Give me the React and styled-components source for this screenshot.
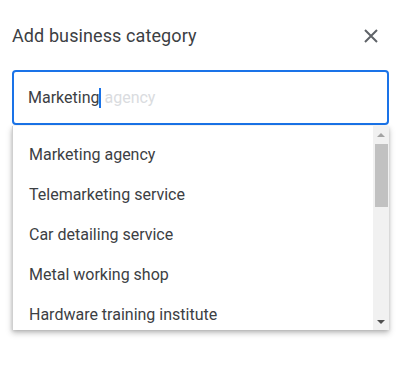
import styled, { createGlobalStyle } from 'styled-components';

const GlobalStyle = createGlobalStyle`
  body {
    margin: 0;
    background: #fff;
    font-family: Roboto, 'Liberation Sans', sans-serif;
  }
`;

const Dialog = styled.div`
  width: 403px;
  height: 368px;
  padding: 24px 14px 0 12px;
  box-sizing: border-box;
  background: #fff;
`;

const Header = styled.div`
  display: flex;
  align-items: center;
  justify-content: space-between;
  height: 24px;
`;

const Title = styled.h1`
  margin: 0;
  font-size: 18px;
  font-weight: 400;
  line-height: 24px;
  color: #3c4043;
  letter-spacing: 0.1px;
`;

const CloseButton = styled.button`
  border: 0;
  background: none;
  padding: 0;
  width: 24px;
  height: 24px;
  display: flex;
  align-items: center;
  justify-content: center;
  margin-right: 6px;
  cursor: pointer;
`;

const Field = styled.div`
  margin-top: 22px;
  width: 377px;
`;

const InputBox = styled.div`
  height: 55px;
  box-sizing: border-box;
  border: 2px solid #1a73e8;
  border-radius: 4px;
  display: flex;
  align-items: center;
  padding-left: 14px;
  font-size: 16px;
  color: #3c4043;
`;

const Typed = styled.span`
  color: #3c4043;
`;

const Caret = styled.span`
  display: inline-block;
  width: 2px;
  height: 20px;
  background: #1a73e8;
  margin: 0 3px 0 0;
`;

const Hint = styled.span`
  color: #dadce0;
`;

const Dropdown = styled.div`
  margin-top: 1px;
  height: 204px;
  display: flex;
  background: #fff;
  border-left: 1px solid #d0d0d0;
  box-shadow: 0 3px 6px rgba(0, 0, 0, 0.25), 0 1px 3px rgba(0, 0, 0, 0.12);
  overflow: hidden;
`;

const List = styled.ul`
  flex: 1;
  list-style: none;
  margin: 0;
  padding: 8px 0 0;
`;

const Item = styled.li`
  height: 40px;
  display: flex;
  align-items: center;
  padding-left: 16px;
  font-size: 16px;
  color: #3c4043;
`;

const Scrollbar = styled.div`
  width: 16px;
  background: #f1f1f1;
  display: flex;
  flex-direction: column;
  align-items: center;
`;

const Arrow = styled.div`
  height: 17px;
  display: flex;
  align-items: center;
  justify-content: center;
  width: 100%;
`;

const Track = styled.div`
  flex: 1;
  width: 100%;
  display: flex;
  justify-content: center;
`;

const Thumb = styled.div`
  width: 13px;
  height: 63px;
  background: #c1c1c1;
  margin-top: 1px;
`;

const options = [
  'Marketing agency',
  'Telemarketing service',
  'Car detailing service',
  'Metal working shop',
  'Hardware training institute',
];

const App = () => (
  <>
    <GlobalStyle />
    <Dialog>
      <Header>
        <Title>Add business category</Title>
        <CloseButton aria-label="Close">
          <svg width="14" height="14" viewBox="0 0 14 14">
            <path d="M1 1L13 13M13 1L1 13" stroke="#5f6368" strokeWidth="2" />
          </svg>
        </CloseButton>
      </Header>
      <Field>
        <InputBox>
          <Typed>Marketing</Typed>
          <Caret />
          <Hint>agency</Hint>
        </InputBox>
        <Dropdown>
          <List>
            {options.map((o) => (
              <Item key={o}>{o}</Item>
            ))}
          </List>
          <Scrollbar>
            <Arrow>
              <svg width="8" height="4" viewBox="0 0 8 4">
                <path d="M4 0L8 4H0Z" fill="#a3a3a3" />
              </svg>
            </Arrow>
            <Track>
              <Thumb />
            </Track>
            <Arrow>
              <svg width="8" height="4" viewBox="0 0 8 4">
                <path d="M0 0H8L4 4Z" fill="#505050" />
              </svg>
            </Arrow>
          </Scrollbar>
        </Dropdown>
      </Field>
    </Dialog>
  </>
);

export default App;
